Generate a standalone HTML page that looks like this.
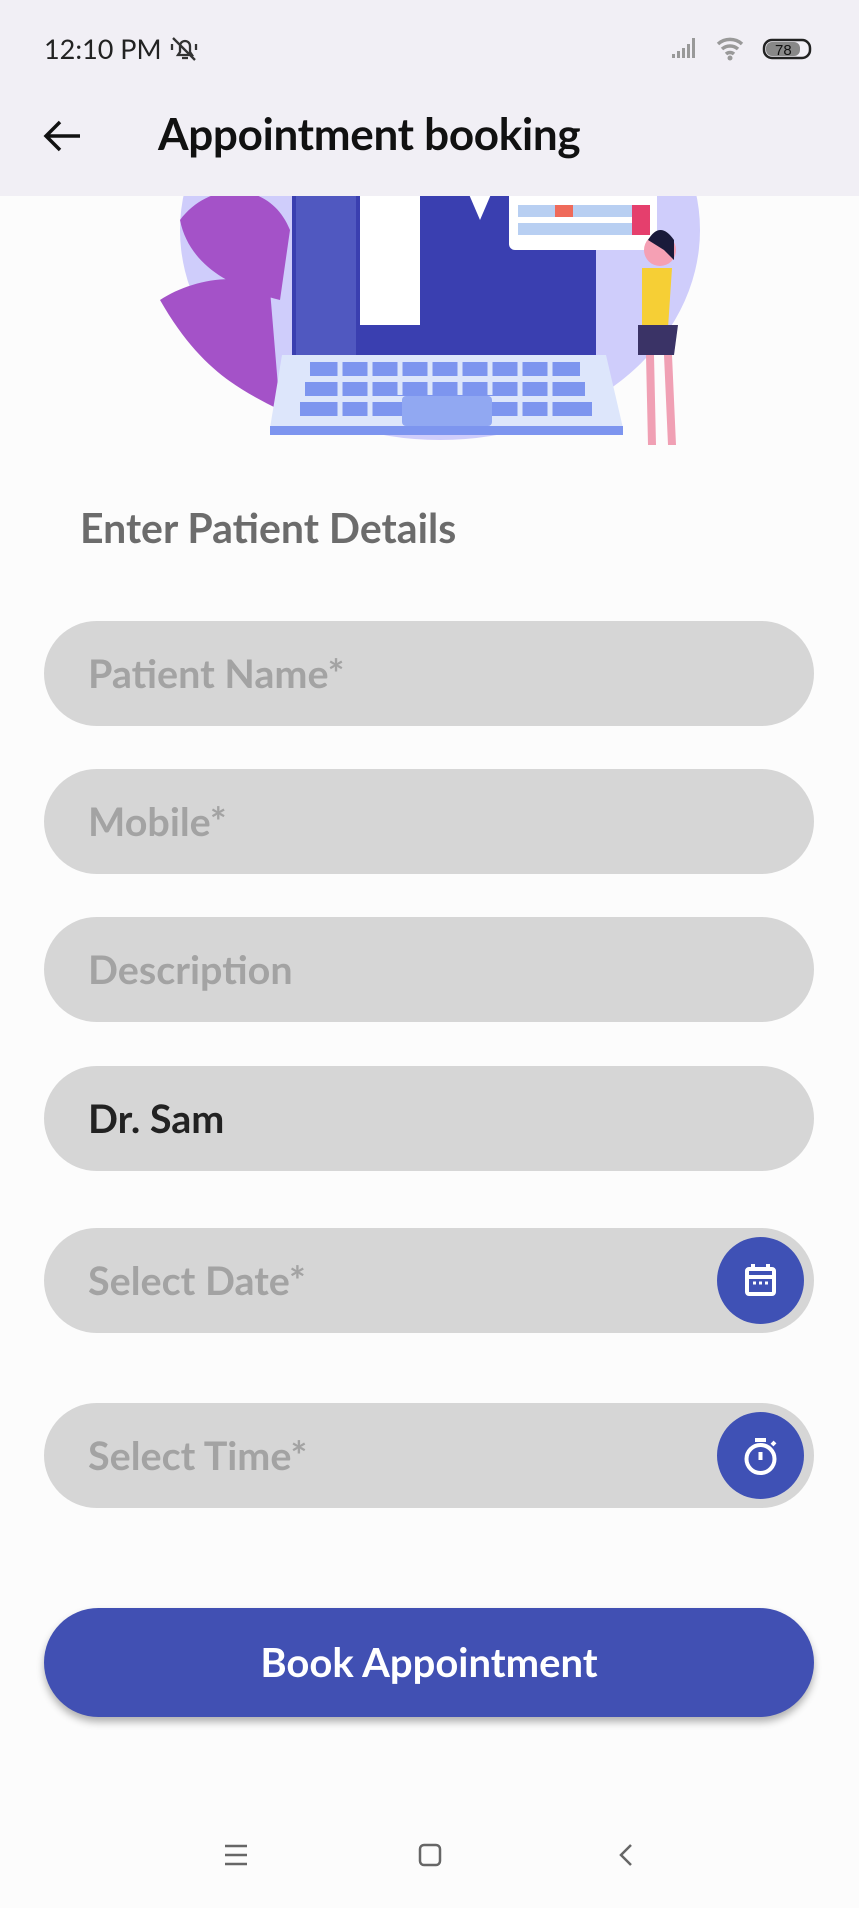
<!DOCTYPE html>
<html><head><meta charset="utf-8"><style>
*{margin:0;padding:0;box-sizing:border-box}
body{width:859px;height:1908px;background:#fcfcfc;font-family:"Lato","Liberation Sans",sans-serif;position:relative;overflow:hidden}
.top{position:absolute;left:0;top:0;width:859px;height:196px;background:#f1eff5;z-index:2}
.time{position:absolute;left:44px;top:32px;font-size:27px;color:#222}
.title{position:absolute;left:158px;top:108px;font-size:44px;font-weight:bold;color:#111;letter-spacing:-0.3px}
.field{position:absolute;left:44px;width:770px;height:105px;border-radius:53px;background:#d6d6d6;font-size:39.5px;font-weight:bold;color:#a3a3a3;padding-left:44px;line-height:105px}
.ic{position:absolute;right:10px;top:9px;width:87px;height:87px;border-radius:50%;background:#3f51b5}
.btn{position:absolute;left:44px;top:1608px;width:770px;height:109px;border-radius:55px;background:#4150b3;color:#fff;font-size:40px;font-weight:bold;text-align:center;line-height:109px;box-shadow:0 5px 8px rgba(0,0,0,.3)}
</style></head><body>
<div class="top">
<div class="time">12:10 PM <svg width="30" height="28" viewBox="0 0 30 28" style="vertical-align:-4px"><path d="M9 20h14l-2-3v-6a5 5 0 0 0-10 0v6zM13 23h6M4 3l22 22M3 9v6M27 9v6" stroke="#333" stroke-width="2.3" fill="none"/></svg></div>
<svg style="position:absolute;left:670px;top:34px" width="145" height="30" viewBox="0 0 145 30"><path d="M2 24h3v-4H2zM7 24h3v-7H7zM12 24h3v-10h-3zM17 24h3v-14h-3zM22 24h3V4h-3z" fill="#999"/><path d="M48 10a18 18 0 0 1 24 0M52 15a12 12 0 0 1 16 0M56 20a6 6 0 0 1 8 0" stroke="#999" stroke-width="3.5" fill="none"/><circle cx="60" cy="24" r="2.5" fill="#999"/><rect x="94" y="6" width="46" height="18" rx="8" fill="none" stroke="#222" stroke-width="2.5"/><rect x="96" y="8" width="34" height="14" rx="6" fill="#888"/><text x="105" y="21" font-size="15" font-family="Liberation Sans" fill="#111">78</text></svg>
<svg style="position:absolute;left:42px;top:118px" width="40" height="36" viewBox="0 0 40 36"><path d="M38 18H5M18 4L4 18l14 14" stroke="#111" stroke-width="3.5" fill="none"/></svg>
<div class="title">Appointment booking</div>
</div>
<svg style="position:absolute;left:0;top:150px" width="859" height="310" viewBox="0 150 859 310">
<ellipse cx="440" cy="230" rx="260" ry="210" fill="#cfcdfb"/>
<path d="M160 300c30-20 80-30 110-10l10 120c-40-20-80-40-120-110zM180 220c30-40 90-40 110 10l-10 70c-40-10-90-30-100-80z" fill="#a452c8"/>
<rect x="292" y="150" width="304" height="205" fill="#3a3fb0"/>
<rect x="296" y="150" width="60" height="205" fill="#5058c0"/>
<rect x="360" y="150" width="60" height="175" fill="#fff"/>
<path d="M450 150l30 70 30-70z" fill="#fff"/>
<rect x="509" y="150" width="148" height="100" rx="6" fill="#fff"/>
<g fill="#b8cff2"><rect x="518" y="205" width="120" height="12"/><rect x="518" y="223" width="120" height="12"/></g>
<rect x="555" y="205" width="18" height="12" fill="#ef6a5a"/><rect x="632" y="205" width="18" height="30" fill="#e53f6d"/>
<path d="M282 355h324l17 73H270z" fill="#dde6fb"/>
<g fill="#7d95ef"><rect x="310" y="362" width="270" height="14"/><rect x="305" y="382" width="280" height="14"/><rect x="300" y="402" width="292" height="14"/></g>
<g stroke="#dde6fb" stroke-width="5"><path d="M340 360v60M370 360v60M400 360v35M430 360v35M460 360v35M490 360v35M520 360v60M550 360v60"/></g>
<rect x="402" y="396" width="90" height="30" rx="4" fill="#91a8f2"/>
<rect x="270" y="426" width="353" height="9" fill="#7d95ef"/>
<circle cx="660" cy="250" r="16" fill="#f5a0b4"/><path d="M648 240q12-20 26 0v20l-10-10z" fill="#1a1a3a"/>
<path d="M642 268h30l-4 60h-26z" fill="#f6cf35"/><path d="M638 325h40l-4 30h-36z" fill="#3a3366"/>
<path d="M646 355h8l2 90h-8zM664 355h8l4 90h-8z" fill="#f0a0b4"/>
</svg>
<div style="position:absolute;left:80px;top:503px;font-size:41px;font-weight:bold;color:#6c6c6c">Enter Patient Details</div>
<div class="field" style="top:621px">Patient Name*</div>
<div class="field" style="top:769px">Mobile*</div>
<div class="field" style="top:917px">Description</div>
<div class="field" style="top:1066px;color:#222">Dr. Sam</div>
<div class="field" style="top:1228px">Select Date*<div class="ic"><svg width="87" height="87" viewBox="0 0 87 87"><rect x="30" y="32" width="27" height="25" rx="2" fill="none" stroke="#fff" stroke-width="4"/><path d="M30 40h27M36 27v6M51 27v6" stroke="#fff" stroke-width="4"/><path d="M36 46h3M42 46h3M48 46h3" stroke="#fff" stroke-width="3"/></svg></div></div>
<div class="field" style="top:1403px">Select Time*<div class="ic"><svg width="87" height="87" viewBox="0 0 87 87"><circle cx="43.5" cy="47" r="14" fill="none" stroke="#fff" stroke-width="4"/><path d="M38 28h11M43.5 40v8M55 33l3-3" stroke="#fff" stroke-width="4"/></svg></div></div>
<div class="btn">Book Appointment</div>
<svg style="position:absolute;left:0;top:1838px" width="859" height="36" viewBox="0 0 859 36"><path d="M225 8h22M225 17h22M225 26h22" stroke="#666" stroke-width="2.5"/><rect x="420" y="7" width="20" height="20" rx="4" fill="none" stroke="#666" stroke-width="2.5"/><path d="M631 7l-10 10 10 10" stroke="#666" stroke-width="2.5" fill="none"/></svg>
</body></html>
